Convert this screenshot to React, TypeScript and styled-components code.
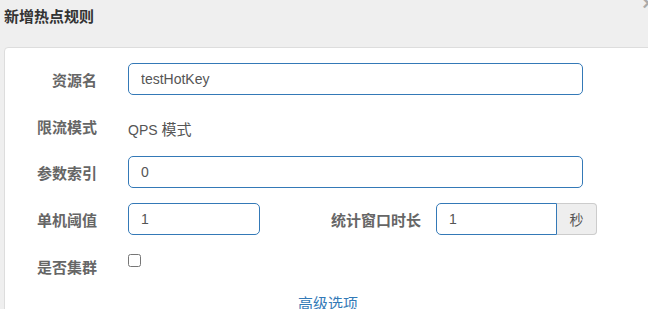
import React from 'react'
import styled, { createGlobalStyle } from 'styled-components'

const GlobalStyle = createGlobalStyle`
  html, body {
    margin: 0;
    padding: 0;
    background: #efefef;
    overflow: hidden;
  }
  body {
    font-family: "Liberation Sans", "Noto Sans CJK SC", sans-serif;
    color: #555;
  }
`

const Page = styled.div`
  width: 648px;
  height: 309px;
  overflow: hidden;
  background: #efefef;
`

const Header = styled.div`
  position: relative;
  height: 47px;
  padding-left: 4px;
  box-sizing: border-box;
`

const Title = styled.h4`
  margin: 0;
  padding-top: 6px;
  font-size: 15px;
  line-height: 21px;
  font-weight: bold;
  color: #333;
`

const Close = styled.span`
  position: absolute;
  top: -7px;
  right: -6px;
  font-size: 20px;
  line-height: 20px;
  color: #aaa;
  font-weight: bold;
`

const Card = styled.div`
  margin-left: 4px;
  margin-right: -4px;
  background: #fff;
  border: 1px solid #ddd;
  border-radius: 4px;
  padding-top: 15px;
  min-height: 300px;
`

const Row = styled.div<{ $compact?: boolean; $last?: boolean }>`
  display: flex;
  align-items: flex-start;
  margin-bottom: ${(p) => (p.$last ? '10px' : '15px')};
  min-height: ${(p) => (p.$compact ? '30px' : '32px')};
`

const Label = styled.label<{ $width?: number; $gap?: number }>`
  width: ${(p) => p.$width ?? 92}px;
  margin-right: ${(p) => p.$gap ?? 31}px;
  flex-shrink: 0;
  text-align: right;
  padding-top: 6px;
  line-height: 21px;
  font-size: 15px;
  font-weight: bold;
  color: #666;
  font-family: "Noto Sans CJK SC", sans-serif;
`

const Static = styled.div`
  padding-top: 8px;
  line-height: 21px;
  font-size: 14px;
  color: #555;
`

const Cjk = styled.span`
  font-family: "Noto Sans CJK SC", sans-serif;
  font-size: 15px;
`

const Input = styled.input<{ $width: number; $grouped?: boolean }>`
  box-sizing: border-box;
  width: ${(p) => p.$width}px;
  height: 32px;
  padding: 0 12px;
  border: 1px solid #3479b7;
  border-radius: ${(p) => (p.$grouped ? '5px 0 0 5px' : '5px')};
  font-family: "Liberation Sans", sans-serif;
  font-size: 14px;
  color: #555;
  background: #fff;
  outline: none;
`

const InputGroup = styled.div`
  display: flex;
`

const Addon = styled.span`
  box-sizing: border-box;
  width: 40px;
  height: 32px;
  display: flex;
  align-items: center;
  justify-content: center;
  background: #eee;
  border: 1px solid #ccc;
  border-left: none;
  border-radius: 0 4px 4px 0;
  font-family: "Noto Sans CJK SC", sans-serif;
  font-size: 14px;
  color: #555;
`

const Check = styled.input`
  width: 13px;
  height: 13px;
  margin: 4px 0 0;
`

const More = styled.div`
  text-align: center;
  font-family: "Noto Sans CJK SC", sans-serif;
  font-size: 15px;
  line-height: 21px;
  color: #337ab7;
`

export default function App() {
  return (
    <Page>
      <GlobalStyle />
      <Header>
        <Title>新增热点规则</Title>
        <Close>×</Close>
      </Header>
      <Card>
        <Row>
          <Label>资源名</Label>
          <Input $width={455} defaultValue="testHotKey" />
        </Row>
        <Row $compact>
          <Label>限流模式</Label>
          <Static>
            QPS <Cjk>模式</Cjk>
          </Static>
        </Row>
        <Row>
          <Label>参数索引</Label>
          <Input $width={455} defaultValue="0" />
        </Row>
        <Row>
          <Label>单机阈值</Label>
          <Input $width={132} defaultValue="1" />
          <Label $width={161} $gap={15}>统计窗口时长</Label>
          <InputGroup>
            <Input $width={121} $grouped defaultValue="1" />
            <Addon>秒</Addon>
          </InputGroup>
        </Row>
        <Row $last>
          <Label>是否集群</Label>
          <Check type="checkbox" />
        </Row>
        <More>高级选项</More>
      </Card>
    </Page>
  )
}
